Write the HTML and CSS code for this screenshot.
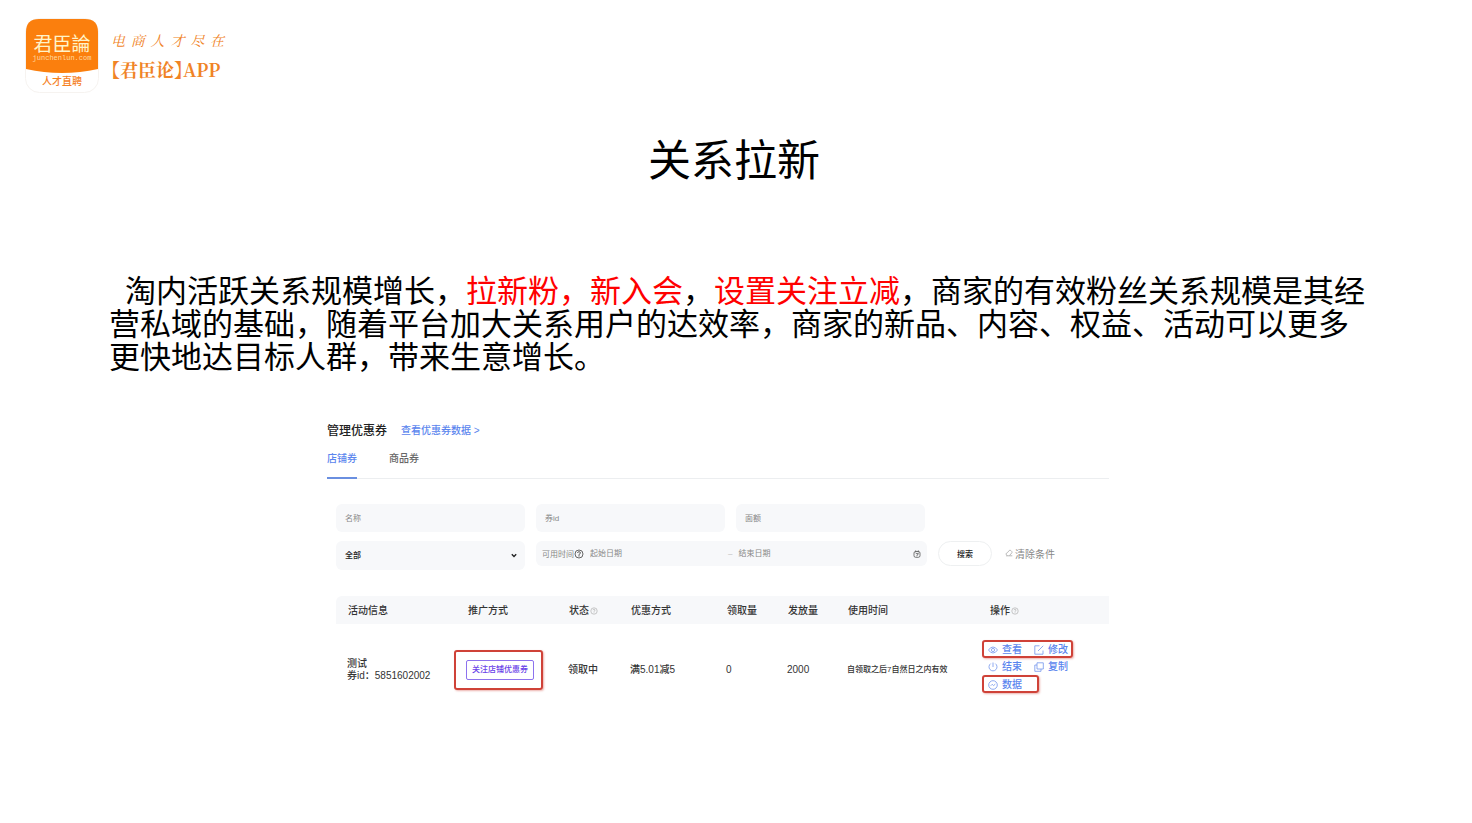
FILE: index.html
```html
<!DOCTYPE html>
<html lang="zh-CN">
<head>
<meta charset="utf-8">
<meta name="viewport" content="width=device-width, initial-scale=1">
<title>关系拉新</title>
<link rel="stylesheet" href="styles.css">
</head>
<body>
<header class="brand">
  <svg class="brand-logo" viewBox="0 0 74 76" role="img" aria-label="君臣論 人才直聘">
    <rect x="0.5" y="0.5" width="73" height="74" rx="14" fill="#fff" stroke="#f6f3f0"/>
    <path d="M1 51V14Q1 1 14 1H60Q73 1 73 14V51Q37 59 1 51Z" fill="#fb7f0d"/>
    <text class="logo-name" x="37" y="33" text-anchor="middle">君臣論</text>
    <text class="logo-site" x="37" y="42" text-anchor="middle">junchenlun.com</text>
    <text class="logo-tag" x="37" y="67" text-anchor="middle">人才直聘</text>
  </svg>
  <div class="brand-words">
    <p class="brand-slogan">电商人才尽在</p>
    <p class="brand-app">【君臣论】APP</p>
  </div>
</header>

<main>
  <h1 class="title">关系拉新</h1>
  <p class="lead">淘内活跃关系规模增长，<em>拉新粉，新入会</em>，<em>设置关注立减</em>，商家的有效粉丝关系规模是其经营私域的基础，随着平台加大关系用户的达效率，商家的新品、内容、权益、活动可以更多更快地达目标人群，带来生意增长。</p>

  <section class="panel">
    <div class="panel-head">
      <h2>管理优惠券</h2>
      <a href="#data">查看优惠券数据 &gt;</a>
    </div>
    <nav class="tabs">
      <a class="tab active" href="#shop">店铺券</a>
      <a class="tab" href="#item">商品券</a>
    </nav>

    <form class="filters">
      <div class="filter-row">
        <input class="field" type="text" placeholder="名称" aria-label="名称">
        <input class="field" type="text" placeholder="券id" aria-label="券id">
        <input class="field" type="text" placeholder="面额" aria-label="面额">
      </div>
      <div class="filter-row">
        <div class="select-wrap">
          <select class="field" aria-label="状态"><option>全部</option></select>
          <svg class="chevron" viewBox="0 0 6 5"><path d="M.8 1.2 3 3.4 5.2 1.2" fill="none" stroke="#222" stroke-width="1.4"/></svg>
        </div>
        <div class="range">
          <label for="from">可用时间</label>
          <svg class="help-dark" viewBox="0 0 10 10" fill="none" stroke="#666"><circle cx="5" cy="5" r="4"/><path d="M3.5 4Q3.6 2.7 5 2.7T6.5 4Q6.4 4.8 5 5.4V7.6"/></svg>
          <input id="from" class="from" type="text" placeholder="起始日期">
          <span class="dash">–</span>
          <input class="to" type="text" placeholder="结束日期" aria-label="结束日期">
          <svg class="calendar" viewBox="0 0 8 8" fill="none" stroke="#555" stroke-width=".8"><rect x="1" y="1.5" width="6" height="5.8" rx="1.6"/><path d="M2.7.4v2M5.3.4v2M2.8 3.6h2.6L3.6 6.2"/></svg>
        </div>
        <button class="search" type="button">搜索</button>
        <button class="clear" type="reset">
          <svg viewBox="0 0 8 8" fill="none" stroke="#aaa" stroke-width=".8"><path d="M1 6.8h6.3M2.3 6.5.9 5.1Q1.3 3.9 2.5 3.6L4.2 1.5Q5 .8 5.8 1.5L6.8 2.5Q7.4 3.3 6.7 4L4.5 6.5"/></svg>清除条件
        </button>
      </div>
    </form>

    <table class="coupons">
      <colgroup>
        <col class="c-info"><col class="c-way"><col class="c-state"><col class="c-offer"><col class="c-got"><col class="c-sent"><col class="c-time"><col>
      </colgroup>
      <thead>
        <tr>
          <th>活动信息</th>
          <th>推广方式</th>
          <th>状态<svg class="help" viewBox="0 0 10 10" fill="none" stroke="#aaa" stroke-width=".8"><circle cx="5" cy="5" r="4"/><path d="M3.7 4Q3.8 2.8 5 2.8T6.3 4Q6.2 4.7 5 5.3V6M5 6.8v.8"/></svg></th>
          <th>优惠方式</th>
          <th>领取量</th>
          <th>发放量</th>
          <th>使用时间</th>
          <th>操作<svg class="help" viewBox="0 0 10 10" fill="none" stroke="#aaa" stroke-width=".8"><circle cx="5" cy="5" r="4"/><path d="M3.7 4Q3.8 2.8 5 2.8T6.3 4Q6.2 4.7 5 5.3V6M5 6.8v.8"/></svg></th>
        </tr>
      </thead>
      <tbody>
        <tr>
          <td class="info">测试<br>券id：5851602002</td>
          <td class="way"><span class="mark mark-tag"><span class="tag">关注店铺优惠券</span></span></td>
          <td>领取中</td>
          <td>满5.01减5</td>
          <td>0</td>
          <td>2000</td>
          <td class="time">自领取之后7自然日之内有效</td>
          <td class="ops">
            <div class="op-row mark">
              <a href="#view"><svg viewBox="0 0 10 10"><path d="M.5 5Q2.4 2 5 2T9.5 5Q7.6 8 5 8T.5 5Z"/><circle cx="5" cy="5" r="1.6"/></svg>查看</a>
              <a href="#edit"><svg viewBox="0 0 10 10"><path d="M5.5.8H.8V9.2H9V5.5M4 6 9.2.8"/></svg>修改</a>
            </div>
            <div class="op-row">
              <a href="#end"><svg viewBox="0 0 10 10"><path d="M5 .5V5M2.7 1.6A4 4 0 1 0 7.3 1.6"/></svg>结束</a>
              <a href="#copy"><svg viewBox="0 0 10 10"><path d="M3 .8H9.3V7H3ZM3 3H.8V9.3H7V7"/></svg>复制</a>
            </div>
            <div class="op-row mark mark-single">
              <a href="#stats"><svg viewBox="0 0 10 10"><circle cx="5" cy="5" r="4.3"/><path d="M2.7 5.8 4.2 4.3 5.6 5.6 7.3 4.1"/></svg>数据</a>
            </div>
          </td>
        </tr>
      </tbody>
    </table>
  </section>
</main>
</body>
</html>
```

FILE: styles.css
```css
* {
  box-sizing: border-box;
}

body {
  margin: 0;
  background: #fff;
  color: #000;
  font-family: "Liberation Sans", "Noto Sans CJK SC", sans-serif;
}

h1, h2, p {
  margin: 0;
  font-weight: 400;
}

a {
  color: #5b85ee;
  text-decoration: none;
}

input, select, button {
  margin: 0;
  border: 0;
  background: none;
  font-family: inherit;
}

/* Brand */
.brand {
  display: flex;
  gap: 12px;
  padding: 18px 25px 0;
}

.brand-logo {
  width: 74px;
  height: 76px;
}

.logo-name {
  fill: #fff3c9;
  font: 400 19px "Noto Sans CJK TC", sans-serif;
}

.logo-site {
  fill: #ffd9a0;
  font: 7px "Liberation Mono", monospace;
}

.logo-tag {
  fill: #f5821f;
  font: 500 10px "Noto Sans CJK SC", sans-serif;
}

.brand-words {
  width: 113px;
  padding-top: 13px;
  color: #f08326;
}

.brand-slogan {
  font: italic 14px/22px "Liberation Serif", "Noto Serif CJK SC", "Noto Sans CJK SC", serif;
  text-align-last: justify;
}

.brand-app {
  margin-top: 4px;
  font: 700 18px/24px "Noto Serif CJK SC", "Noto Sans CJK SC", serif;
  font-feature-settings: "halt";
  white-space: nowrap;
}

/* Copy */
.title {
  margin-top: 41px;
  padding-right: 4px;
  font-size: 43px;
  line-height: 52px;
  text-align: center;
}

.lead {
  margin-top: 88px;
  padding: 0 101px 0 109px;
  font-size: 31px;
  line-height: 33px;
  text-indent: 16px;
}

.lead em {
  color: #f00;
  font-style: normal;
}

/* Coupon panel */
.panel {
  max-width: 1109px;
  margin-top: 49px;
  padding: 0 0 24px 327px;
  color: #333;
  font-size: 10px;
  font-weight: 500;
}

.panel-head {
  display: flex;
  align-items: center;
  gap: 14px;
  line-height: 16px;
}

.panel-head h2 {
  color: #222;
  font-size: 12px;
  font-weight: 500;
}

.tabs {
  display: flex;
  gap: 32px;
  margin-top: 12px;
  border-bottom: 1px solid #eceef0;
}

.tab {
  margin-bottom: -1px;
  padding-bottom: 10px;
  border-bottom: 2px solid transparent;
  color: #666;
  line-height: 16px;
}

.tab.active {
  border-color: #6a8fe0;
  color: #5b85ee;
}

.filters {
  display: grid;
  gap: 9px;
  margin: 25px 0 0 9px;
}

.filter-row {
  display: flex;
  align-items: flex-start;
  gap: 11px;
}

.field {
  width: 189px;
  height: 28px;
  padding: 0 9px;
  border-radius: 6px;
  background: #f7f8fa;
  color: #222;
  font-size: 8px;
}

::placeholder {
  color: #888;
  opacity: 1;
}

.select-wrap {
  position: relative;
}

.select-wrap .field {
  display: block;
  height: 29px;
  appearance: none;
  font-weight: 500;
}

.chevron {
  position: absolute;
  top: 12px;
  right: 8px;
  width: 6px;
  height: 5px;
}

.range {
  display: flex;
  align-items: center;
  width: 391px;
  height: 25px;
  padding: 0 6px;
  border-radius: 6px;
  background: #f7f8fa;
  color: #888;
  font-size: 8px;
  font-weight: 400;
}

.range input {
  min-width: 0;
  padding: 0 6px;
  font-size: 8px;
}

.range .from {
  width: 144px;
}

.range .to {
  flex: 1;
}

.help-dark {
  width: 10px;
  height: 10px;
}

.dash {
  color: #bbb;
}

.calendar {
  width: 8px;
  height: 8px;
}

.search {
  width: 54px;
  height: 25px;
  padding: 0;
  border: 1px solid #eef0f1;
  border-radius: 13px;
  color: #222;
  font-size: 8px;
  font-weight: 500;
}

.clear {
  display: flex;
  align-items: center;
  gap: 2px;
  height: 24px;
  padding: 0 2px;
  color: #888;
  font-size: 10px;
}

.clear svg {
  width: 8px;
  height: 8px;
}

/* Table */
.coupons {
  width: calc(100% - 9px);
  margin: 26px 0 0 9px;
  border-collapse: collapse;
  table-layout: fixed;
}

.c-info { width: 120px; }
.c-way { width: 101px; }
.c-state { width: 62px; }
.c-offer { width: 96px; }
.c-got { width: 61px; }
.c-sent { width: 60px; }
.c-time { width: 142px; }

.coupons th {
  height: 28px;
  padding: 1px 0 0 12px;
  background: #f7f8fa;
  font-weight: 500;
  line-height: 12px;
  text-align: left;
  white-space: nowrap;
}

.coupons th:first-child {
  border-radius: 6px 0 0 0;
}

.coupons td {
  height: 90px;
  padding: 2px 0 0 11px;
  line-height: 12px;
  white-space: nowrap;
}

.coupons .time {
  font-size: 8px;
}

.help {
  width: 8px;
  height: 8px;
  margin-left: 1px;
  vertical-align: -1px;
}

.mark {
  border: 2px solid #cf4238;
  border-radius: 3px;
  box-shadow: 1px 1px 2px #cf423866;
}

.coupons .way {
  padding-left: 0;
}

.mark-tag {
  display: inline-flex;
  margin-left: -2px;
  padding: 8px 7px 8px 10px;
  vertical-align: middle;
}

.tag {
  padding: 0 5px;
  border: 1px solid #8d72ee;
  border-radius: 2px;
  color: #6a42e8;
  font-size: 8px;
  line-height: 18px;
}

.coupons .ops {
  padding: 16px 0 0 4px;
  vertical-align: top;
}

.op-row {
  display: flex;
  gap: 12px;
  width: 91px;
  height: 17px;
  padding: 1px 6px 0;
}

.op-row.mark {
  height: 18px;
  padding: 2px 4px 0;
}

.op-row.mark-single {
  width: 57px;
}

.op-row a {
  display: flex;
  align-items: center;
  gap: 4px;
}

.op-row svg {
  width: 10px;
  height: 10px;
  fill: none;
  stroke: #7396ec;
  stroke-width: .8;
}
```
